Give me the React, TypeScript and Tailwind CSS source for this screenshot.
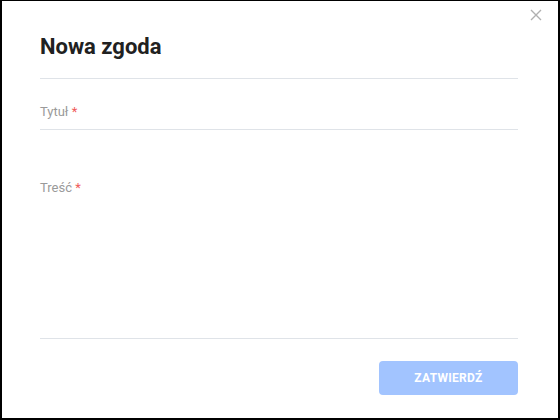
import React from 'react';

const App: React.FC = () => {
  return (
    <div
      className="w-[560px] h-[420px] bg-white border-black border-t border-l-2 border-r-2 border-b-2 flex flex-col relative"
      style={{ fontFamily: 'Roboto, "Liberation Sans", sans-serif' }}
    >
      <button className="absolute right-[16px] top-[8px] text-[#b0b0b0]" aria-label="Zamknij">
        <svg width="12" height="12" viewBox="0 0 12 12" fill="none" stroke="currentColor" strokeWidth="1.4">
          <path d="M1 1 L11 11 M11 1 L1 11" />
        </svg>
      </button>

      <div className="flex flex-col pl-[38px] pr-[40px] pt-[30px] flex-1">
        <h1 className="text-[22px] leading-[32px] font-bold text-[#212121] pb-[15px] border-b border-[#dfe3e8]">
          Nowa zgoda
        </h1>

        <div className="pt-[25px] border-b border-[#dfe3e8] pb-[9px]">
          <label className="block text-[13px] leading-[16px] text-[#9a9a9a]">
            Tytuł <span className="text-[#f05a5a]">*</span>
          </label>
        </div>

        <div className="pt-[50px] border-b border-[#dfe3e8] h-[209px]">
          <label className="block text-[13px] leading-[16px] text-[#9a9a9a]">
            Treść <span className="text-[#f05a5a]">*</span>
          </label>
        </div>

        <div className="flex justify-end pt-[22px]">
          <button className="w-[139px] h-[34px] rounded bg-[#a2c4ff] text-white text-[12px] font-bold tracking-[0.3px]">
            ZATWIERDŹ
          </button>
        </div>
      </div>
    </div>
  );
};

export default App;
